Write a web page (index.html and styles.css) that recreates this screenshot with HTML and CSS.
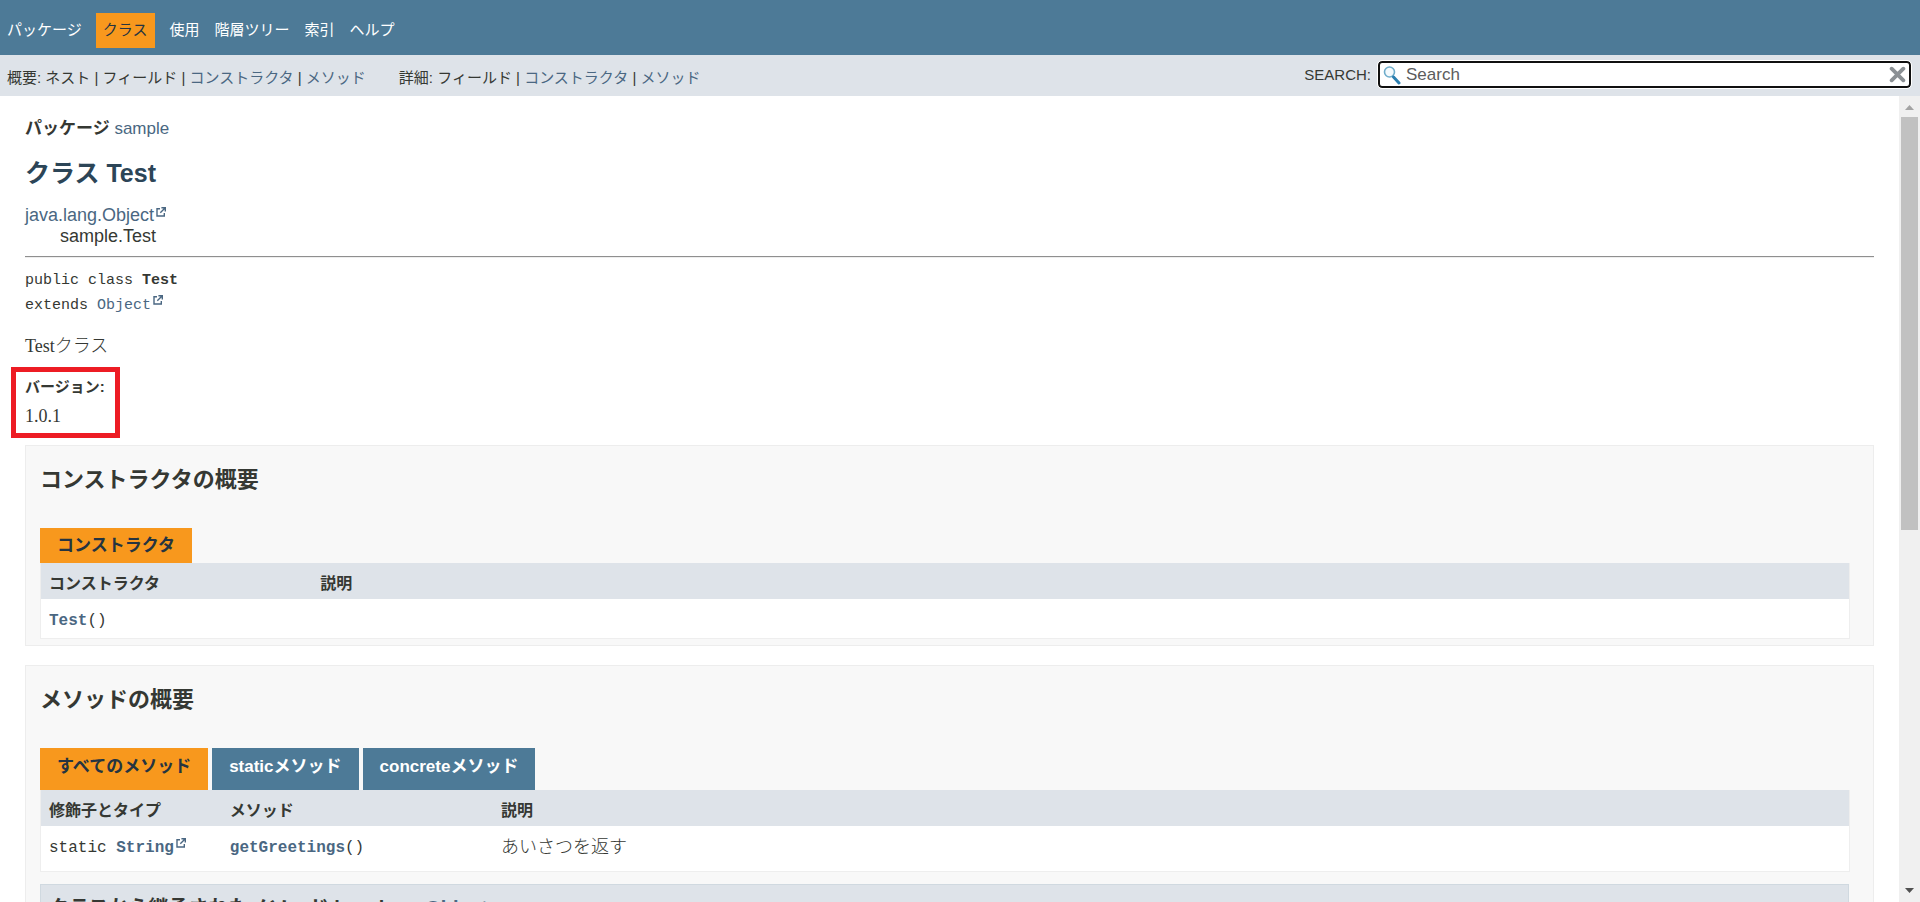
FILE: index.html
```html
<!DOCTYPE html>
<html lang="ja">
<head>
<meta charset="utf-8">
<title>Test</title>
<link rel="stylesheet" href="styles.css">
</head>
<body>
<svg class="defs" aria-hidden="true">
  <symbol id="ext" viewBox="0 0 10 10">
    <path d="M4 1.7H1V9h7.3V6M5.4.7h3.9v3.9M9 1 4.3 5.7" fill="none" stroke="currentColor" stroke-width="1.4"/>
  </symbol>
</svg>
<header>
  <nav class="top-nav">
    <a href="#">パッケージ</a>
    <span class="current">クラス</span>
    <a href="#">使用</a>
    <a href="#">階層ツリー</a>
    <a href="#">索引</a>
    <a href="#">ヘルプ</a>
  </nav>
  <div class="sub-nav">
    <div class="sub-list">概要: ネスト | フィールド | <a href="#">コンストラクタ</a> | <a href="#">メソッド</a></div>
    <div class="sub-list">詳細: フィールド | <a href="#">コンストラクタ</a> | <a href="#">メソッド</a></div>
    <form class="search">
      <label for="search">SEARCH:</label>
      <div class="search-box">
        <svg class="lens" viewBox="0 0 18 20" aria-hidden="true"><circle cx="6.5" cy="7" r="5" fill="#f4fafd" stroke="#6fadcb" stroke-width="1.6"/><path d="M10.5 12 16 18" stroke="#2c7fb0" stroke-width="3" stroke-linecap="round"/></svg>
        <input id="search" type="text" placeholder="Search">
        <button type="reset" aria-label="reset"><svg viewBox="0 0 16 16" aria-hidden="true"><path d="M2.5 2.5l11 11M13.5 2.5l-11 11" stroke="#8b9094" stroke-width="3.6" stroke-linecap="round"/></svg></button>
      </div>
    </form>
  </div>
</header>
<div class="viewport">
  <main>
    <div class="package"><b>パッケージ</b> <a href="#">sample</a></div>
    <h1>クラス Test</h1>
    <div class="inheritance">
      <a href="#">java.lang.Object<svg class="ext"><use href="#ext"/></svg></a>
      <div class="child">sample.Test</div>
    </div>
    <hr>
    <div class="signature">public class <b>Test</b><br>extends <a href="#">Object<svg class="ext"><use href="#ext"/></svg></a></div>
    <p class="description">Testクラス</p>
    <dl class="version">
      <dt>バージョン:</dt>
      <dd>1.0.1</dd>
    </dl>
    <section>
      <h2>コンストラクタの概要</h2>
      <div class="caption"><span>コンストラクタ</span></div>
      <table>
        <thead><tr><th class="wide">コンストラクタ</th><th>説明</th></tr></thead>
        <tbody><tr><td><code><a class="member" href="#">Test</a>()</code></td><td></td></tr></tbody>
      </table>
    </section>
    <section>
      <h2>メソッドの概要</h2>
      <div class="tabs">
        <button type="button" class="active">すべてのメソッド</button>
        <button type="button">staticメソッド</button>
        <button type="button">concreteメソッド</button>
      </div>
      <table class="methods">
        <thead><tr><th class="narrow">修飾子とタイプ</th><th class="wide">メソッド</th><th>説明</th></tr></thead>
        <tbody><tr>
          <td><code>static <a class="member" href="#">String<svg class="ext"><use href="#ext"/></svg></a></code></td>
          <td><code><a class="member" href="#">getGreetings</a>()</code></td>
          <td class="note">あいさつを返す</td>
        </tr></tbody>
      </table>
      <h3>クラスから継承されたメソッド java.lang.<a href="#">Object</a></h3>
    </section>
  </main>
  <div class="scrollbar" aria-hidden="true">
    <svg viewBox="0 0 21 21"><path d="M6 14h9l-4.5-5z" fill="#a3a3a3"/></svg>
    <div class="track"><div class="thumb"></div></div>
    <svg viewBox="0 0 21 21"><path d="M6 7h9l-4.5 5z" fill="#505050"/></svg>
  </div>
</div>
</body>
</html>
```
FILE: styles.css
```css
* { box-sizing: border-box; }

body {
  margin: 0;
  height: 100vh;
  display: flex;
  flex-direction: column;
  overflow: hidden;
  background: #fff;
  color: #353833;
  font-family: "Liberation Sans", "Noto Sans CJK JP", sans-serif;
  font-size: 15px;
}

a { color: #4a6782; text-decoration: none; }

.defs { display: none; }

.top-nav {
  display: flex;
  align-items: center;
  gap: 15px;
  height: 55px;
  padding: 5px 8px 0 7px;
  background: #4d7a97;
  color: #fff;
}
.top-nav a { padding-bottom: 4px; color: #fff; }
.top-nav .current {
  height: 35px;
  margin: 0 -1px;
  padding: 0 8px 0 7px;
  line-height: 34px;
  background: #f8981d;
  color: #253441;
}

.sub-nav {
  display: flex;
  gap: 33px;
  height: 41px;
  padding: 0 9px 0 7px;
  background: #dee3e9;
}
.sub-list { line-height: 45px; }
.search {
  display: flex;
  align-items: center;
  gap: 7px;
  margin-left: auto;
  padding-bottom: 2px;
}
.search-box {
  display: flex;
  align-items: center;
  width: 533px;
  height: 27px;
  padding: 0 3px;
  border: 2px solid #101010;
  border-radius: 4px;
  outline: 1px solid #fff;
  background: #fff;
}
.lens { width: 18px; height: 20px; }
.search input {
  flex: 1;
  min-width: 0;
  padding: 0 5px;
  border: 0;
  outline: 0;
  background: none;
  color: #353833;
  font: 17px "Liberation Sans", sans-serif;
}
.search input::placeholder { color: #5c5c5c; }
.search button { display: flex; padding: 0; border: 0; background: none; }
.search button svg { width: 17px; height: 17px; }

.viewport { display: flex; flex: 1; min-height: 0; }
main { flex: 1; min-width: 0; padding: 21px 25px 0; overflow: hidden; }

.scrollbar { display: flex; flex-direction: column; width: 21px; background: #f0f0f0; }
.scrollbar svg { width: 21px; height: 21px; }
.track { flex: 1; padding: 0 2px; }
.thumb { height: 54%; background: #c1c1c1; }

.ext { width: 10px; height: 10px; margin-left: 2px; vertical-align: 4px; }

.package { font-size: 17px; line-height: 24px; }
h1 { margin: 14px 0; color: #2c4557; font-size: 25px; line-height: 36px; }
.inheritance { font-size: 18px; line-height: 21px; }
.child { padding-left: 35px; }
hr { margin: 9px 0; border: 0; border-top: 1px solid #8f8f8f; border-bottom: 1px solid #eee; }
.signature { padding-top: 1px; font: 15px/25px "Liberation Mono", monospace; }
.description {
  margin: 15px 0 8px;
  font: 300 18px/26px "Liberation Serif", "Noto Sans CJK JP", serif;
}
.version {
  width: 109px;
  margin: 0 0 7px -14px;
  padding: 1px 9px 2px;
  border: 5px solid #ed1c24;
}
.version dt { font-weight: bold; line-height: 28px; }
.version dd { margin: 0; font: 18px/30px "Liberation Serif", serif; }

section {
  margin-bottom: 19px;
  padding: 0 23px 6px 14px;
  border: 1px solid #ededed;
  background: #f8f8f8;
}
h2 { margin: 0; padding: 17px 0 31px; font-size: 22px; line-height: 34px; }
.caption { display: flex; }
.caption span {
  height: 35px;
  padding: 0 17px;
  background: #f8981d;
  color: #253441;
  font-size: 17px;
  font-weight: bold;
  line-height: 36px;
}
.tabs { display: flex; gap: 4px; }
.tabs button {
  height: 42px;
  padding: 0 17px 5px;
  border: 0;
  background: #4d7a97;
  color: #fff;
  font: bold 17px/24px "Liberation Sans", "Noto Sans CJK JP", sans-serif;
}
.tabs .active { background: #f8981d; color: #253441; }

table {
  width: 100%;
  table-layout: fixed;
  border-collapse: separate;
  border-spacing: 0;
  border: 1px solid #eee;
  border-top: 0;
  background: #fff;
}
th, td { padding: 0 8px; text-align: left; }
th { height: 36px; padding-top: 5px; background: #dee3e9; font-size: 16px; line-height: 24px; }
td { height: 39px; padding-top: 4px; }
.methods td { height: 45px; padding: 0 8px 3px; }
.narrow { width: 10%; }
.wide { width: 15%; }
code { font: 16px "Liberation Mono", monospace; }
.member { font-weight: bold; }
.note { font-size: 18px; font-weight: 300; line-height: 24px; }
h3 {
  margin: 12px 1px 0 0;
  padding: 9px 8px 7px;
  border: 1px solid #d0d9e0;
  background: #dee3e9;
  font-size: 20px;
  line-height: 28px;
}
```
